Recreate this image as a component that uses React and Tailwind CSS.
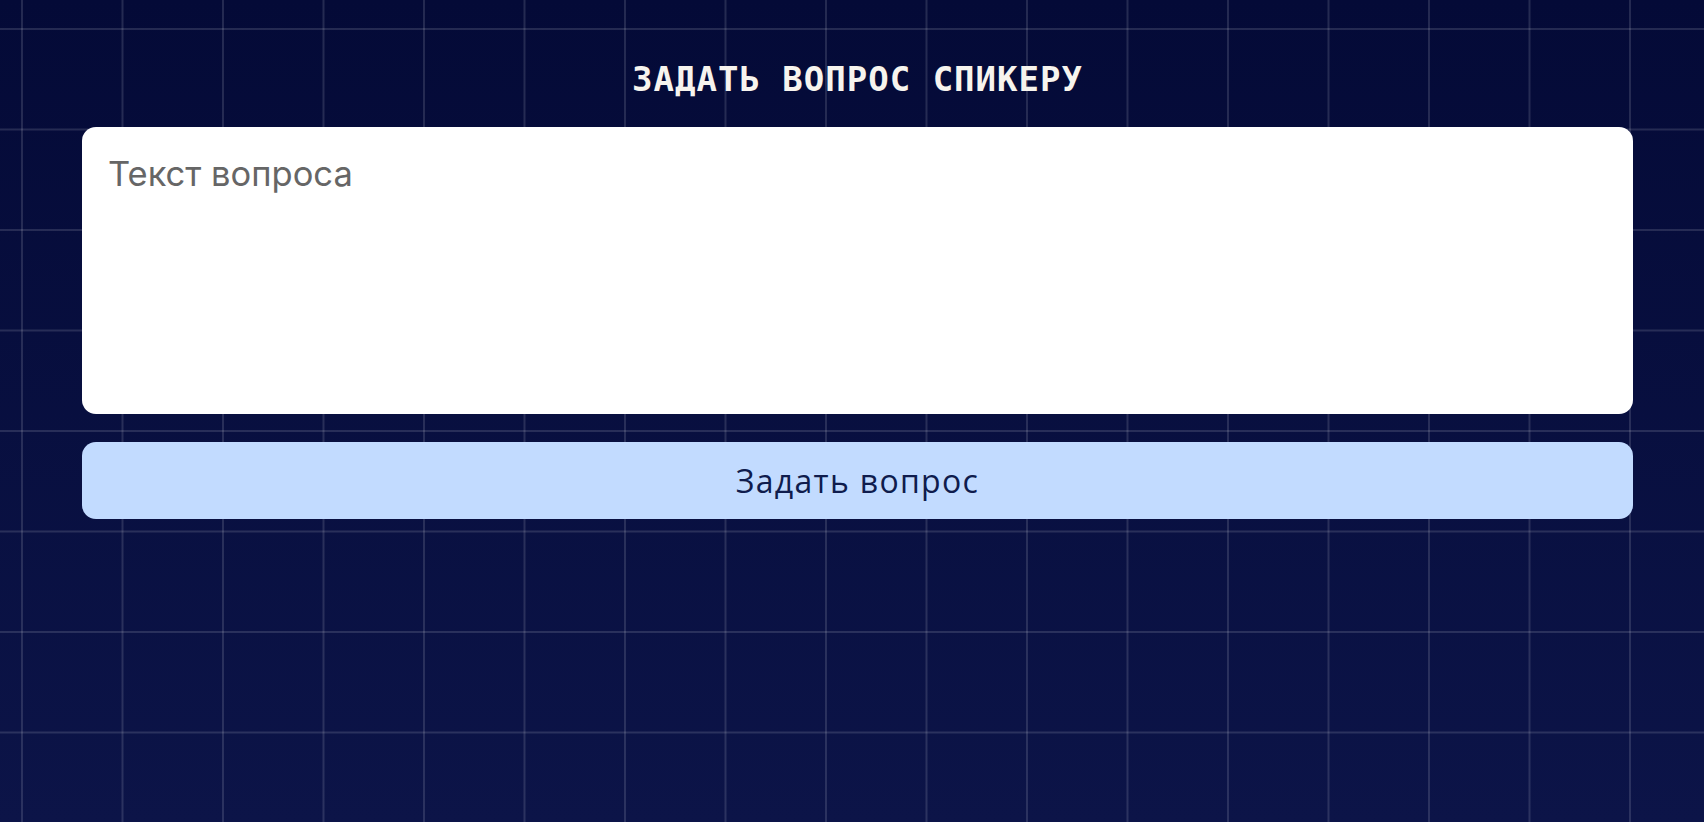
import React, { useState } from 'react';

const App = () => {
  const [question, setQuestion] = useState('');

  return (
    <div className="min-h-screen w-full bg-[linear-gradient(to_right,rgba(255,255,255,0.13)_2px,transparent_2px),linear-gradient(to_bottom,rgba(255,255,255,0.13)_2px,transparent_2px),linear-gradient(to_bottom,#040a37,#0c1448)] [background-size:100.5px_100.5px,100.5px_100.5px,100%_100%] [background-position:21px_28px,21px_28px,0_0]">
      <div className="pl-[82px] pr-[71px] pt-[59px]">
        <h2 className="text-center text-[34px] leading-[40px] font-bold tracking-[1px] text-[#f7f4ee] font-['DejaVu_Sans_Mono',monospace]">
          ЗАДАТЬ ВОПРОС СПИКЕРУ
        </h2>

        <div className="mt-[28px] flex flex-col gap-[28px]">
          <textarea
            value={question}
            onChange={(e) => setQuestion(e.target.value)}
            placeholder="Текст вопроса"
            className="h-[287px] w-full resize-none rounded-[14px] bg-white px-[26px] pt-[27px] text-[34.5px] leading-[40px] text-[#222] placeholder:text-[#666666] outline-none font-['Inter',sans-serif]"
          />

          <button
            type="button"
            className="flex h-[77px] w-full items-center justify-center rounded-[14px] border-0 bg-[#c2dbff] text-[32px] tracking-[1.3px] text-[#0f1c4d] font-['Open_Sans',sans-serif]"
          >
            Задать вопрос
          </button>
        </div>
      </div>
    </div>
  );
};

export default App;
